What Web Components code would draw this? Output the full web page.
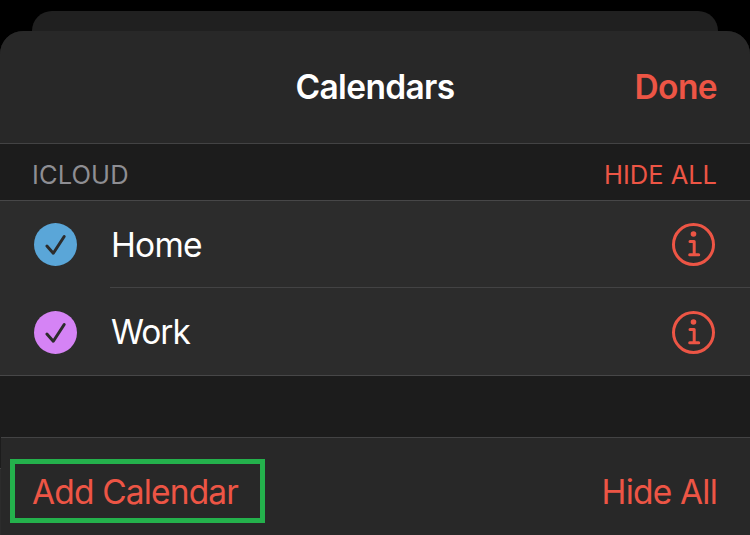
<!DOCTYPE html>
<html lang="en">
<head>
<meta charset="utf-8">
<title>Calendars</title>
<style>
html, body { margin: 0; height: 100%; background: #000; overflow: hidden; }
body { font-family: Inter, "Liberation Sans", sans-serif; color: #fff; }
</style>
</head>
<body>
<calendar-sheet>
  <sheet-header slot="header"><ui-label kind="title">Calendars</ui-label><ui-label slot="action" kind="done">Done</ui-label></sheet-header>
  <section-header><ui-label kind="caption">ICLOUD</ui-label><ui-label slot="action" kind="hide">HIDE ALL</ui-label></section-header>
  <calendar-list>
    <calendar-row color="#5aa6d8"><ui-label kind="home">Home</ui-label></calendar-row>
    <calendar-row color="#d583f5"><ui-label kind="work">Work</ui-label></calendar-row>
  </calendar-list>
  <sheet-footer slot="footer"><ui-label kind="add">Add Calendar</ui-label><ui-label slot="action" kind="all">Hide All</ui-label></sheet-footer>
</calendar-sheet>
<script>
const define = (name, html, setup) => customElements.define(name, class extends HTMLElement {
  constructor() {
    super();
    this.attachShadow({ mode: 'open' }).innerHTML = html;
  }
  connectedCallback() { if (setup) setup(this); }
});

define('ui-label', `<style>
:host { display: block; font-size: 33.5px; line-height: 42px; white-space: nowrap; font-weight: 400; }
:host([kind=title]) { font-weight: 600; letter-spacing: -0.65px; }
:host([kind=done]) { font-weight: 600; letter-spacing: -0.6px; color: #ed5545; }
:host([kind=caption]) { font-size: 25.5px; line-height: 32px; letter-spacing: 0.1px; color: #8e8e93; }
:host([kind=hide]) { font-size: 25.5px; line-height: 32px; letter-spacing: -0.03px; color: #ed5545; }
:host([kind=home]) { letter-spacing: -0.8px; }
:host([kind=work]) { letter-spacing: -1.05px; }
:host([kind=add]) { letter-spacing: -0.85px; color: #ed5545; }
:host([kind=all]) { letter-spacing: -0.8px; color: #ed5545; }
</style><slot></slot>`);

define('calendar-sheet', `<style>
:host { display: flex; flex-direction: column; height: 535px; width: 750px; padding-top: 11px; box-sizing: border-box; }
.behind { height: 20px; margin: 0 32px; flex: none; background: #202020; border-radius: 20px 20px 0 0; }
.card { flex: 1; display: flex; flex-direction: column; background: #1c1c1c; border-radius: 23px 23px 0 0; overflow: hidden; }
.space { flex: 1; }
</style><div class="behind"></div><div class="card"><slot name="header"></slot><slot></slot><div class="space"></div><slot name="footer"></slot></div>`);

define('sheet-header', `<style>
:host { display: grid; grid-template-columns: 1fr auto 1fr; align-items: center; height: 113px; padding: 0 32px; box-sizing: border-box; background: #282828; border-bottom: 1px solid #434344; }
.title { grid-column: 2; } .action { justify-self: end; padding-right: 1px; }
</style><div class="title"><slot></slot></div><div class="action"><slot name="action"></slot></div>`);

define('section-header', `<style>
:host { display: flex; justify-content: space-between; align-items: center; height: 56px; padding: 6px 33px 0 32px; box-sizing: border-box; }
</style><slot></slot><slot name="action"></slot>`);

define('calendar-list', `<style>
:host { display: block; background: #2c2c2c; border-top: 1px solid #474748; border-bottom: 1px solid #474748; }
</style><slot></slot>`);

define('calendar-row', `<style>
:host { display: flex; height: 87px; padding-left: 34px; box-sizing: border-box; }
:host(:last-child) { padding-top: 1px; }
.check { flex: none; width: 43px; height: 43px; margin-top: 22px; }
.body { flex: 1; display: flex; justify-content: space-between; margin-left: 33px; padding-right: 35px; border-bottom: 1px solid #434344; }
:host(:last-child) .body { border-bottom: 0; }
.text { margin: 23px 0 0 1px; }
:host(:last-child) .text { margin-top: 22px; }
.info { width: 43px; height: 43px; margin-top: 22px; }
svg { display: block; }
</style>
<svg class="check" viewBox="0 0 43 43"><circle class="dot" cx="21.5" cy="21.5" r="21.5"/><path d="M12.9 23.1 L19.3 30.2 L30.2 13.5" fill="none" stroke="#2c2c2c" stroke-width="3" stroke-linecap="round" stroke-linejoin="round"/></svg>
<div class="body"><div class="text"><slot></slot></div>
<svg class="info" viewBox="0 0 43 43"><circle cx="21.5" cy="21.5" r="20" fill="none" stroke="#ed5545" stroke-width="3"/><circle cx="21.5" cy="11" r="2.8" fill="#ed5545"/><path d="M18 18.6 H22.2 V31.7 M17.7 31.7 H26.7" fill="none" stroke="#ed5545" stroke-width="3" stroke-linecap="round" stroke-linejoin="round"/></svg></div>`,
  el => el.shadowRoot.querySelector('.dot').setAttribute('fill', el.getAttribute('color')));

define('sheet-footer', `<style>
:host { display: flex; height: 98px; }
.edge { width: 1px; background: linear-gradient(#1c1c1c 31px, #434344 31px 32px, #2c2c2c 32px); }
.bar { flex: 1; display: flex; justify-content: space-between; align-items: flex-start; padding: 21px 33px 0 9px; background: #282828; border-top: 1px solid #434344; }
.outlined { box-sizing: border-box; width: 255px; height: 64px; border: 5px solid #24b14c; padding: 7px 0 0 17px; }
.action { padding-top: 12px; }
</style><div class="edge"></div><div class="bar"><div class="outlined"><slot></slot></div><div class="action"><slot name="action"></slot></div></div>`);
</script>
</body>
</html>
